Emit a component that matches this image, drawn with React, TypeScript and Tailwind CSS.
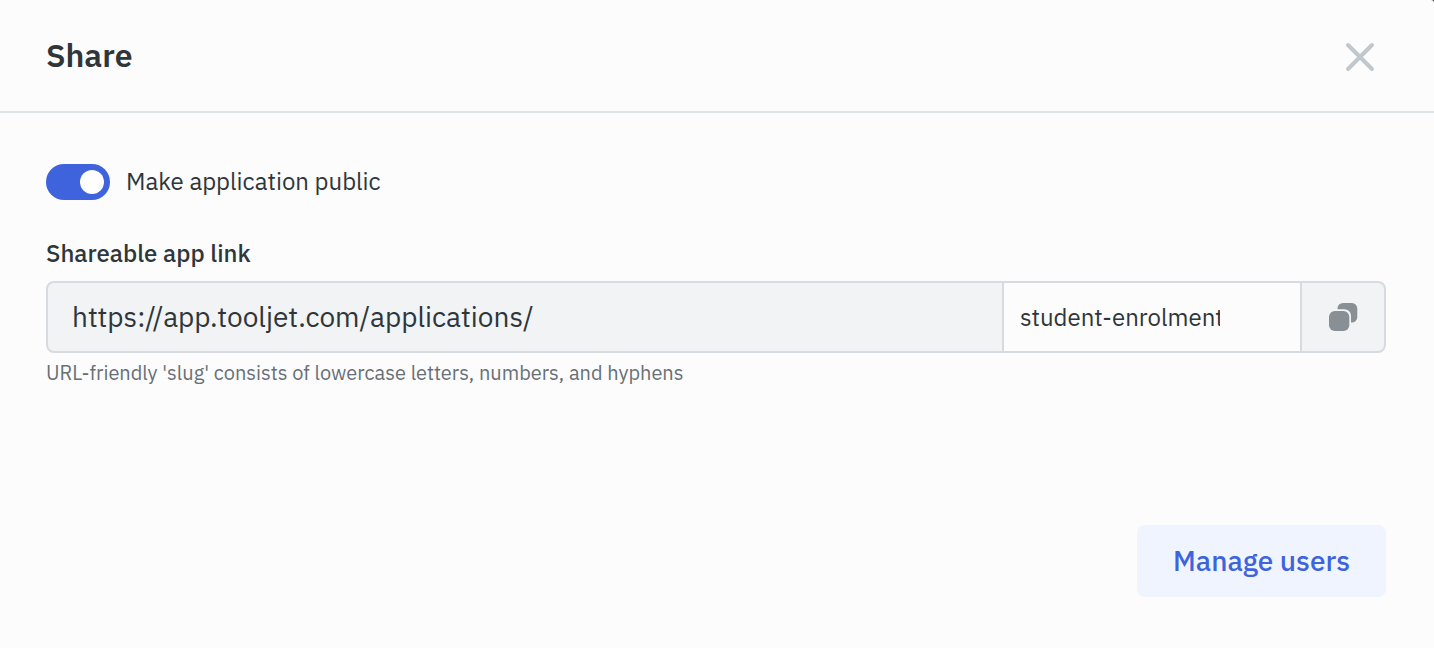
import { useState } from "react";

function CloseIcon() {
  return (
    <svg width="32" height="32" viewBox="0 0 32 32" fill="none" stroke="#c1c8cd" strokeWidth="4" strokeLinecap="round">
      <path d="M4 4L28 28M28 4L4 28" />
    </svg>
  );
}

function CopyIcon() {
  return (
    <svg width="30" height="30" viewBox="0 0 30 30" fill="#889096">
      <path d="M9.5 7.3V6.5A5.5 5.5 0 0 1 15 1H24A5.5 5.5 0 0 1 29.3 6.5V15A5.5 5.5 0 0 1 23.8 20.5H23V13.5A6.5 6.5 0 0 0 16.5 7.3Z" />
      <rect x="1" y="9" width="20.3" height="20" rx="5.8" />
    </svg>
  );
}

export default function App() {
  const [isPublic, setIsPublic] = useState(true);
  return (
    <div className="h-[648px] w-[1434px] bg-[#3c3f41] font-['IBM_Plex_Sans','Roboto',sans-serif] text-[#2f3639]">
      <section className="flex h-full flex-col overflow-hidden rounded-tr-[3px] bg-[#fcfcfd]">
        <header className="flex h-[113px] shrink-0 items-center justify-between border-b-2 border-[#dfe3e6] pr-[58px] pl-[46px]">
          <h1 className="mb-0.5 text-[32px] leading-10 font-semibold">Share</h1>
          <button aria-label="Close" className="mt-[3px]">
            <CloseIcon />
          </button>
        </header>
        <div className="flex grow flex-col pt-[51px] pr-12 pl-[46px]">
          <div className="flex h-9 items-center gap-4">
            <button
              role="switch"
              aria-checked={isPublic}
              onClick={() => setIsPublic(!isPublic)}
              className={`flex h-9 w-16 items-center rounded-full px-1.5 ${isPublic ? "justify-end bg-[#3e63dd]" : "justify-start bg-[#c1c8cd]"}`}
            >
              <span className="size-6 rounded-full bg-white" />
            </button>
            <span className="mb-0.5 text-[24px] leading-9 whitespace-nowrap">Make application public</span>
          </div>
          <p className="mt-[35px] text-[24px] leading-9 font-medium">Shareable app link</p>
          <div className="mt-[10px] flex h-[72px] shrink-0 overflow-hidden rounded-lg border-2 border-[#d7dbdf] bg-[#f1f3f5]">
            <div className="flex w-[954px] items-center pl-6 text-[28px]">
              <span className="whitespace-nowrap">https://app.tooljet.com/applications/</span>
            </div>
            <div className="flex w-[300px] items-center border-x-2 border-[#d7dbdf] bg-[#fcfcfd] pl-4 text-[24px]">
              <span className="w-[200px] overflow-hidden whitespace-nowrap">student-enrolment</span>
            </div>
            <button aria-label="Copy link" className="flex grow items-center justify-center">
              <CopyIcon />
            </button>
          </div>
          <p className="mt-1 text-[20px] leading-8 text-[#687076]">
            <span className="whitespace-nowrap">URL-friendly 'slug' consists of lowercase letters, numbers, and hyphens</span>
          </p>
        </div>
        <footer className="flex justify-end pr-12 pb-[51px]">
          <button className="h-[72px] w-[249px] rounded-lg bg-[#f0f4ff] text-[28px] font-medium whitespace-nowrap text-[#3e63dd]">
            Manage users
          </button>
        </footer>
      </section>
    </div>
  );
}
